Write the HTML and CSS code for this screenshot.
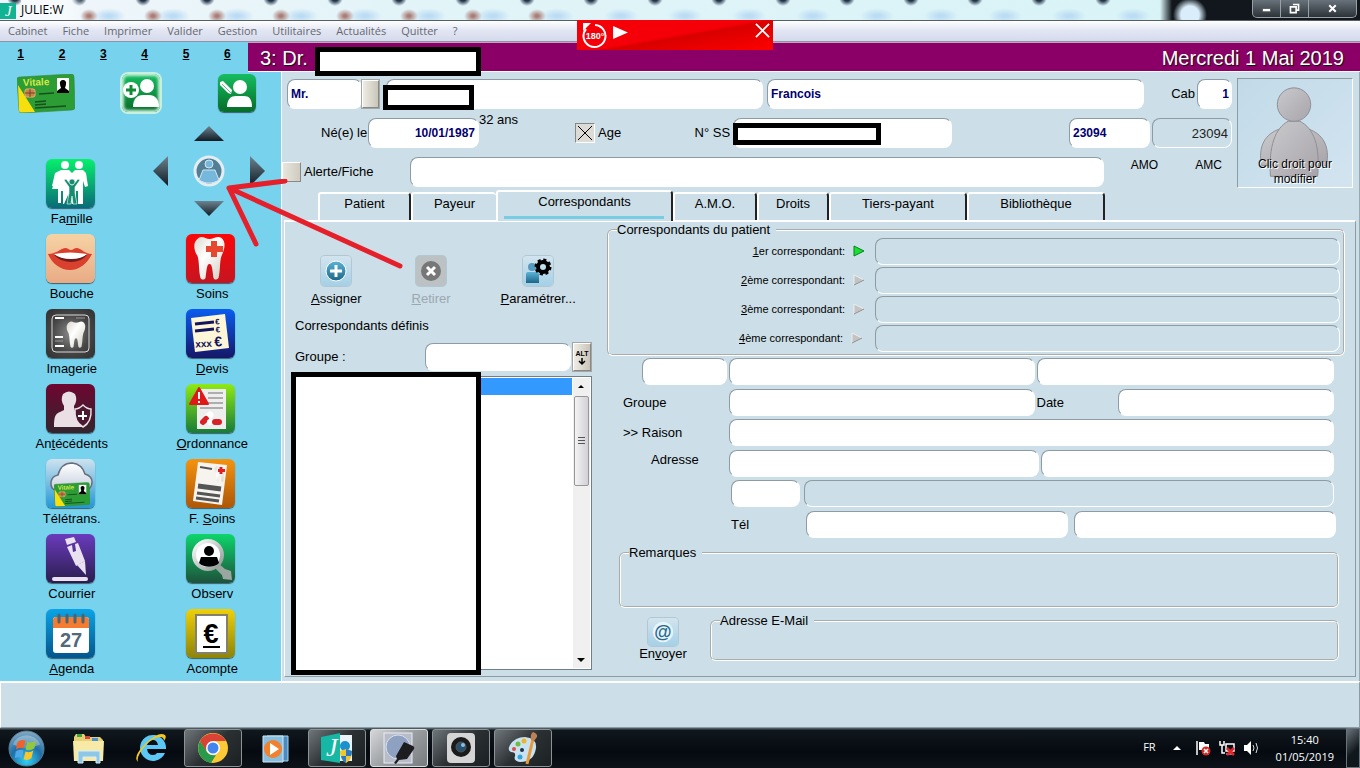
FILE: index.html
```html
<!DOCTYPE html>
<html lang="fr">
<head>
<meta charset="utf-8">
<title>JULIE:W</title>
<link rel="stylesheet" href="styles.css">
</head>
<body>
<svg class="defs" aria-hidden="true">
  <defs>
    <linearGradient id="g-arrow" x1="0" y1="0" x2="0" y2="1"><stop offset="0" stop-color="#6d8390"/><stop offset="1" stop-color="#101c24"/></linearGradient>
    <linearGradient id="g-tooth" x1="0" y1="0" x2="1" y2="1"><stop offset="0" stop-color="#d9d6cc"/><stop offset=".4" stop-color="#ffffff"/><stop offset="1" stop-color="#cfcabd"/></linearGradient>
    <linearGradient id="g-body" x1="0" y1="0" x2="1" y2="1"><stop offset="0" stop-color="#c9c9cc"/><stop offset="1" stop-color="#a8a5aa"/></linearGradient>
    <linearGradient id="g-cloud" x1="0" y1="0" x2="0" y2="1"><stop offset="0" stop-color="#ffffff"/><stop offset="1" stop-color="#c3cede"/></linearGradient>
    <linearGradient id="g-blue" x1="0" y1="0" x2="0" y2="1"><stop offset="0" stop-color="#5cb4d8"/><stop offset="1" stop-color="#1c6688"/></linearGradient>
    <linearGradient id="g-metal" x1="0" y1="0" x2="1" y2="1"><stop offset="0" stop-color="#ffffff"/><stop offset="1" stop-color="#8d9793"/></linearGradient>
    <radialGradient id="g-orb" cx=".5" cy=".85" r=".9"><stop offset="0" stop-color="#2fd3f7"/><stop offset=".5" stop-color="#1e6ea8"/><stop offset="1" stop-color="#93b4c8"/></radialGradient>
    <symbol id="card" viewBox="0 0 58 39">
      <path d="M3 3 L54 0 Q57 0 57 3 L58 33 Q58 36 55 36 L5 39 Q2 39 2 36 L0 5 Q0 3 3 3Z" fill="#2c9c34" stroke="#3b8440" stroke-width=".6"/>
      <path d="M1 11 L18 38 L4 38.500 Q2 38.500 2 36Z" fill="#f6df0c"/>
      <text x="6" y="12" font-size="10" class="svg-label" fill="#d6e84a" transform="rotate(-2 6 13)">Vitale</text>
      <rect x="40" y="4" width="12" height="15" fill="#fff"/><path d="M46 6a3 3 0 0 1 3 4c0 2-1 3-1 4l4 3v2H40v-2l4-3c0-1-1-2-1-4a3 3 0 0 1 3-4Z" fill="#000"/>
      <rect x="8" y="15" width="10" height="8" rx="2" fill="#c9824a" stroke="#f0b070"/><path d="M8 19h10M13 15v8" stroke="#73451f"/>
      <path d="M22 20l15-1M18 28l11-1M18 31l11-1M18 34l31-2" stroke="#174f1f" stroke-width="1.500"/>
    </symbol>
    <symbol id="tooth" viewBox="0 0 32 44">
      <path d="M5 2C9-1 12 3 16 3S24-1 28 2c5 4 3 12 0 18-2 6-1 14-3 22-2 2-4 2-5 0-1-6-1-14-4-14s-3 8-4 14c-1 2-4 2-5 0-2-8-1-16-3-22C0 14-1 6 5 2Z" fill="url(#g-tooth)"/>
    </symbol>
  </defs>
</svg>
<div class="app">
  <header class="titlebar">
    <svg class="logo" viewBox="0 0 16 16"><rect width="16" height="16" fill="#12b393"/><text x="5" y="13" class="script-j" font-size="15" fill="#fff">J</text></svg>
    <span class="title">JULIE:W</span>
    <div class="window-buttons">
      <button class="wb" aria-label="Réduire"><svg viewBox="0 0 16 16"><rect x="3" y="8" width="10" height="4" fill="#fff" stroke="#555"/></svg></button>
      <button class="wb" aria-label="Restaurer"><svg viewBox="0 0 16 16"><path d="M6 3h7v7h-2M3 6h7v7H3z" fill="none" stroke="#fff" stroke-width="2"/></svg></button>
      <button class="wb wb-close" aria-label="Fermer"><svg viewBox="0 0 16 16"><path d="M4 4l8 8M12 4l-8 8" stroke="#fff" stroke-width="2.500"/></svg></button>
    </div>
  </header>
  <nav class="menubar">
    <button>Cabinet</button><button>Fiche</button><button>Imprimer</button><button>Valider</button><button>Gestion</button><button>Utilitaires</button><button>Actualités</button><button>Quitter</button><button>?</button>
  </nav>
  <div class="banner-row">
    <div class="shortcuts"><a href="#">1</a><a href="#">2</a><a href="#">3</a><a href="#">4</a><a href="#">5</a><a href="#">6</a></div>
    <div class="banner"><span>3: Dr.</span><span class="date">Mercredi 1 Mai 2019</span><i class="mask mask-doctor"></i></div>
  </div>
  <main class="main">
    <aside class="sidebar">
      <div class="top-icons">
        <button class="bare card-btn" aria-label="Carte Vitale"><svg class="card-icon"><use href="#card"/></svg></button>
        <button class="bare" aria-label="Nouveau patient"><svg class="sq green glow" viewBox="0 0 38 38"><circle cx="25" cy="12" r="7" fill="#fff"/><path d="M11 33c0-8 4-12 10-12h6c6 0 10 4 10 12Z" fill="#fff"/><circle cx="9" cy="16" r="8" fill="#fff"/><path d="M9 11v10M4 16h10" stroke="#118a38" stroke-width="3"/></svg></button>
        <button class="bare" aria-label="Modifier patient"><svg class="sq green" viewBox="0 0 38 38"><circle cx="22" cy="13" r="7" fill="#fff"/><path d="M9 33c0-8 4-11 9-11h8c5 0 8 3 8 11Z" fill="#fff"/><path d="M2 8l3-1 9 9-1 4-3-1-8-8Z" fill="#fff"/><path d="M4 10l9 9" stroke="#18a04a" stroke-width=".7"/></svg></button>
      </div>
      <div class="tiles">
        <button class="tile"><svg class="sq famille" viewBox="0 0 49 49"><g fill="#fff"><circle cx="19" cy="6" r="4"/><circle cx="33" cy="6" r="4"/><path d="M15 11h8l3 3 3-3h8l3 3 2 13-3 1-2-6v23h-5V32h-2v13h-4l-4-9-4 9h-1V32h-2v12h-3V30h-6l4-11-1 9-3-1 3-13Z"/></g><g fill="#168c70" stroke="#fff" stroke-width=".6"><circle cx="26" cy="23" r="3"/><path d="M18 21l5 7v6l-2 11h4l1-8 1 8h4l-2-11v-6l5-7-2-1-5 6h-2l-5-6Z"/></g></svg><span>Fa<u>m</u>ille</span></button>
        <div class="pad">
          <button class="bare up" aria-label="Haut"><svg width="30" height="15"><path d="M0 15L15 0l15 15Z" fill="url(#g-arrow)"/></svg></button>
          <button class="bare left" aria-label="Gauche"><svg width="15" height="30"><path d="M15 0v30L0 15Z" fill="url(#g-arrow)"/></svg></button>
          <button class="bare center" aria-label="Fiche patient"><svg width="34" height="34" viewBox="0 0 34 34"><circle cx="17" cy="17" r="14" fill="#527f96" stroke="#e3edf2" stroke-width="3"/><g fill="#75b8db" stroke="#d4e7f0"><circle cx="17" cy="10" r="4"/><path d="M11 16h12l4 10c-6 4-14 4-20 0Z"/></g></svg></button>
          <button class="bare right" aria-label="Droite"><svg width="15" height="30"><path d="M0 0v30l15-15Z" fill="url(#g-arrow)"/></svg></button>
          <button class="bare down" aria-label="Bas"><svg width="30" height="15"><path d="M0 0L15 15 30 0Z" fill="url(#g-arrow)"/></svg></button>
        </div>
        <button class="tile"><svg class="sq bouche" viewBox="0 0 49 49"><path d="M2 20c8 0 12-5 17-6 3 0 4 2 6 2s3-2 6-2c5 1 8 6 15 6-5 10-13 16-22 16S6 30 2 20Z" fill="#d9402d"/><path d="M8 21q16-3 33 0-6 7-16 7T8 21Z" fill="#701c1c"/><path d="M8 20q16-3 33 0-5 5-16 5T8 20Z" fill="#fff"/></svg><span>Bouche</span></button>
        <button class="tile"><svg class="sq soins" viewBox="0 0 49 49"><use href="#tooth" x="7" y="2" width="33" height="44"/><path d="M25 7h6v5h6v6h-6v5h-6v-5h-5v-6h5Z" fill="#e8472f"/></svg><span>Soins</span></button>
        <button class="tile"><svg class="sq imagerie" viewBox="0 0 49 49"><rect x="6" y="6" width="37" height="37" rx="4" fill="none" stroke="#d8d8d8"/><path d="M9 9h9M9 28h8M9 37h9" stroke="#fff" stroke-width="2"/><path d="M30 9h9M9 32h8" stroke="#999"/><use href="#tooth" x="20" y="12" width="20" height="27"/></svg><span>Imagerie</span></button>
        <button class="tile"><svg class="sq devis" viewBox="0 0 49 49"><path d="M5 9l34-4 4 34-34 4Z" fill="#fdf7d8"/><path d="M9 15l19-2M9 22l19-2" stroke="#15155e" stroke-width="3"/><g fill="#15155e" class="svg-label" transform="rotate(-3 20 30)"><text x="30" y="16" font-size="8">€</text><text x="30" y="24" font-size="8">€</text><text x="9" y="38" font-size="10">xxx</text><text x="28" y="38" font-size="14">€</text></g></svg><span><u>D</u>evis</span></button>
        <button class="tile"><svg class="sq antecedents" viewBox="0 0 49 49"><path d="M17 10q6-5 12 0 3 6-1 12v4l8 5v12H8c0-10 1-13 6-15l4-2v-4q-4-6-1-12Z" fill="#eadfe4"/><path d="M37 21q4 4 8 4 1 13-8 18-9-5-8-18 4 0 8-4Z" fill="#4b1830" stroke="#eadfe4" stroke-width="1.500"/><path d="M37 27v9M32 32h9" stroke="#fff" stroke-width="2"/></svg><span>An<u>t</u>écédents</span></button>
        <button class="tile"><svg class="sq ordonnance" viewBox="0 0 49 49"><path d="M11 5h29v40H11Z" fill="#eeeeee"/><path d="M22 9h15M22 14h15M14 19h23M14 24h23" stroke="#999" stroke-width="1.500"/><path d="M13 4l9 16H4Z" fill="#e01818" stroke="#e01818" stroke-width="2" stroke-linejoin="round"/><path d="M13 8v7M13 17v2" stroke="#fff" stroke-width="2"/><path d="M17 38l7-7" stroke="#fff" stroke-width="7" stroke-linecap="round"/><path d="M17 38l3-3" stroke="#d72327" stroke-width="6" stroke-linecap="round"/><path d="M24 38h9" stroke="#fff" stroke-width="6" stroke-linecap="round"/><path d="M29 38h4" stroke="#d72327" stroke-width="6" stroke-linecap="round"/></svg><span><u>O</u>rdonnance</span></button>
        <button class="tile"><svg class="sq teletrans" viewBox="0 0 49 49"><path d="M12 32q-8-1-7-9 1-6 7-7 3-12 14-12 10 1 13 11 7 2 7 8 0 7-7 9Z" fill="url(#g-cloud)" stroke="#66707c" stroke-width="1.500"/><use href="#card" x="8" y="23" width="36" height="25"/></svg><span>Télétrans.</span></button>
        <button class="tile"><svg class="sq fsoins" viewBox="0 0 49 49"><path d="M12 3l29 3-5 40-29-4Z" fill="#f7f3ef"/><path d="M14 8l12 2" stroke="#555" stroke-width="2"/><path d="M12 27l23 3" stroke="#555" stroke-width="5"/><path d="M11 34l23 3M10 39l23 3" stroke="#555" stroke-width="3"/><use href="#tooth" x="28" y="7" width="12" height="16"/><path d="M35 8v7M32 11.500h7" stroke="#e02020" stroke-width="3"/></svg><span>F. <u>S</u>oins</span></button>
        <button class="tile"><svg class="sq courrier" viewBox="0 0 49 49"><g fill="#e9e0f0"><path d="M19 5l9-2 2 5-9 3Z"/><path d="M21 13l5-2 1 7 3-1-1-7 3-1 7 18-9 5Z"/><path d="M31 31l8-4 1 14Z"/><rect x="6" y="43" width="36" height="4" rx="2"/></g></svg><span>Courrier</span></button>
        <button class="tile"><svg class="sq observ" viewBox="0 0 49 49"><path d="M33 30l6 5 6 2 1 9-9-1-1-4-7-7Z" fill="#9aa7a0"/><circle cx="22" cy="21" r="14" fill="#fff" stroke="url(#g-metal)" stroke-width="4"/><circle cx="23" cy="17" r="5"/><path d="M15 23h16l2 6c-5 5-15 5-20 0Z"/></svg><span>Observ</span></button>
        <button class="tile"><svg class="sq agenda" viewBox="0 0 49 49"><rect x="7" y="8" width="36" height="36" rx="3" fill="#fff"/><path d="M7 19V11q0-3 3-3h30q3 0 3 3v8Z" fill="#f47b30"/><path d="M13 6v7M21 6v7M29 6v7M37 6v7" stroke="#4d6470" stroke-width="3" stroke-linecap="round"/><text x="25" y="38" font-size="20" class="svg-label" text-anchor="middle" fill="#51697a">27</text></svg><span><u>A</u>genda</span></button>
        <button class="tile"><svg class="sq acompte" viewBox="0 0 49 49"><rect x="10" y="6" width="31" height="38" fill="#fff" stroke="#84816a" stroke-width="2"/><text x="25" y="34" font-size="27" class="svg-label" text-anchor="middle">€</text><path d="M17 38h17" stroke="#000" stroke-width="2"/></svg><span>Acompte</span></button>
      </div>
    </aside>
    <section class="content">
      <div class="patient">
        <div class="patient-rows">
          <div class="row row-name">
            <input class="field civ" value="Mr." aria-label="Civilité"><button class="bevel civ-btn" aria-label="Choisir la civilité"></button>
            <div class="name-wrap"><input class="field" aria-label="Nom"><i class="mask mask-name"></i></div>
            <input class="field firstname" value="Francois" aria-label="Prénom">
            <label class="cab" for="cab">Cab</label><input id="cab" class="field num cab-input" value="1">
          </div>
          <div class="row row-birth">
            <label class="born" for="born">Né(e) le</label><input id="born" class="field num date-input" value="10/01/1987">
            <span class="age">32 ans</span>
            <label class="check"><input type="checkbox" checked class="box">Age</label>
            <label class="ss" for="ss">N° SS</label><div class="ss-wrap"><input id="ss" class="field"><i class="mask mask-ss"></i></div>
            <input class="field code" value="23094" aria-label="Code"><input class="field readonly num code2" value="23094" readonly aria-label="Numéro">
          </div>
          <div class="row row-alert">
            <label class="check"><input type="checkbox" class="box">Alerte/Fiche</label>
            <input class="field alert-input" aria-label="Alerte">
            <span class="amo">AMO</span><span class="amc">AMC</span>
          </div>
        </div>
        <div class="photo">
          <svg viewBox="0 0 116 110"><g fill="url(#g-body)" stroke="#8f8f96"><path d="M24 88C20 68 28 56 42 51H72C86 56 94 68 90 88Z"/><path d="M33 99C31 68 38 50 51 43H63C77 50 84 68 81 99Z"/><circle cx="57" cy="26" r="17"/></g></svg>
          <span>Clic droit pour modifier</span>
        </div>
      </div>
      <div class="tabs" role="tablist">
        <button class="tab w-a" role="tab">Patient</button><button class="tab w-b" role="tab">Payeur</button><button class="tab w-c active" role="tab" aria-selected="true">Correspondants</button><button class="tab w-d" role="tab">A.M.O.</button><button class="tab w-e" role="tab">Droits</button><button class="tab w-f" role="tab">Tiers-payant</button><button class="tab w-f" role="tab">Bibliothèque</button>
      </div>
      <div class="panel">
        <div class="left-col">
          <div class="actions">
            <button class="action"><svg viewBox="0 0 30 30"><circle cx="15" cy="15" r="10" fill="url(#g-blue)" stroke="#fff"/><path d="M15 9v12M9 15h12" stroke="#fff" stroke-width="3"/></svg><span><u>A</u>ssigner</span></button>
            <button class="action off" disabled><svg viewBox="0 0 30 30"><circle cx="15" cy="15" r="10" fill="#777"/><path d="M11 11l8 8M19 11l-8 8" stroke="#fff" stroke-width="3"/></svg><span><u>R</u>etirer</span></button>
            <button class="action"><svg viewBox="0 0 30 30"><circle cx="9" cy="11" r="4" fill="#559ac0"/><path d="M3 27V18q0-2 2-2h8q3 0 3 3v8Z" fill="url(#g-blue)"/><circle cx="20" cy="11" r="5" fill="none" stroke="#000" stroke-width="4"/><circle cx="20" cy="11" r="7" fill="none" stroke="#000" stroke-width="3" stroke-dasharray="3 2.500"/></svg><span><u>P</u>aramétrer...</span></button>
          </div>
          <p class="defined">Correspondants définis</p>
          <div class="group-row"><label for="grp">Groupe :</label><input id="grp" class="field"><button class="bevel alt" aria-label="Liste des groupes"><svg viewBox="0 0 16 26"><text x="8" y="12" font-size="7" class="svg-label" text-anchor="middle">ALT</text><path d="M8 14v6M5 17l3 3 3-3" stroke="#000" fill="none" stroke-width="1.500"/></svg></button></div>
          <div class="list">
            <ul><li class="selected"></li></ul>
            <div class="scroll"><button class="bare" aria-label="Monter"><svg width="16" height="16"><path d="M5 10l3-3 3 3Z"/></svg></button><div class="thumb"></div><button class="bare scroll-end" aria-label="Descendre"><svg width="16" height="16"><path d="M4 6h8l-4 4Z"/></svg></button></div>
            <i class="mask mask-list"></i>
          </div>
        </div>
        <div class="right-col">
          <fieldset class="frame corr">
            <legend>Correspondants du patient</legend>
            <div class="corr-row"><label for="c1"><u>1</u>er correspondant:</label><svg viewBox="0 0 12 12"><path d="M1 1v10l10-5Z" fill="#18e030" stroke="#08801c"/></svg><input id="c1" class="field readonly" readonly></div>
            <div class="corr-row"><label for="c2"><u>2</u>ème correspondant:</label><svg viewBox="0 0 12 12"><path d="M1 1v10l10-5Z" fill="#c3c3c3" stroke="#eee"/><path d="M1 11l10-5" stroke="#888"/></svg><input id="c2" class="field readonly" readonly></div>
            <div class="corr-row"><label for="c3"><u>3</u>ème correspondant:</label><svg viewBox="0 0 12 12"><path d="M1 1v10l10-5Z" fill="#c3c3c3" stroke="#eee"/><path d="M1 11l10-5" stroke="#888"/></svg><input id="c3" class="field readonly" readonly></div>
            <div class="corr-row last"><label for="c4"><u>4</u>ème correspondant:</label><svg viewBox="0 0 12 12"><path d="M1 1v10l10-5Z" fill="#c3c3c3" stroke="#eee"/><path d="M1 11l10-5" stroke="#888"/></svg><input id="c4" class="field readonly" readonly></div>
          </fieldset>
          <div class="details">
            <div class="block"><div class="drow"><div class="lead"><input class="field civ2" aria-label="Titre"></div><input class="field f-wide" aria-label="Nom du correspondant"><input class="field f-half" aria-label="Prénom du correspondant"></div></div>
            <div class="block">
              <div class="drow"><label class="lead" for="dg">Groupe</label><input id="dg" class="field f-half"><div class="f-half date-part"><label for="dd">Date</label><input id="dd" class="field"></div></div>
              <div class="drow"><label class="lead" for="dr">&gt;&gt; Raison</label><input id="dr" class="field f-half"></div>
            </div>
            <div class="block">
              <div class="drow"><label class="lead indent" for="da">Adresse</label><input id="da" class="field f-wider"><input class="field f-half" aria-label="Complément d'adresse"></div>
              <div class="drow city"><span class="lead"></span><input class="field zip" aria-label="Code postal"><input class="field readonly f-half" readonly aria-label="Ville"></div>
            </div>
            <div class="block"><div class="drow phone"><label for="dt">Tél</label><input id="dt" class="field f-half"><input class="field f-half" aria-label="Téléphone 2"></div></div>
          </div>
          <fieldset class="frame remarks"><legend>Remarques</legend></fieldset>
          <div class="mail-row">
            <button class="action send"><svg viewBox="0 0 30 30"><circle cx="15" cy="15" r="11" fill="#e6f4fb"/><text x="15" y="21" font-size="19" class="svg-label" text-anchor="middle" fill="#28688e">@</text></svg><span>En<u>v</u>oyer</span></button>
            <fieldset class="frame mail"><legend>Adresse E-Mail</legend></fieldset>
          </div>
        </div>
      </div>
    </section>
  </main>
  <div class="statusbar"></div>
  <footer class="taskbar">
    <button class="start" aria-label="Démarrer"><svg viewBox="0 0 38 38"><circle cx="19" cy="19" r="18" fill="url(#g-orb)" stroke="#5b7a8c"/><path d="M5 15A15 15 0 0 1 33 15Q19 22 5 15Z" fill="#fff" opacity=".3"/><path d="M10 12q4-3 8-1l-2 8q-4-2-8 1Z" fill="#f0622b"/><path d="M20 12q4 2 9-1l-2 8q-5 3-9 1Z" fill="#93c83e"/><path d="M8 22q4-3 8-1l-2 8q-4-2-7 0Z" fill="#4fa8e8"/><path d="M18 22q4 2 8-1l-2 8q-4 3-8 1Z" fill="#fbc62c"/></svg></button>
    <button class="task" aria-label="Explorateur"><svg viewBox="0 0 34 34"><path d="M2 6l2-3h8l2 3 14 0 3 3v20H2Z" fill="#e7cf74"/><path d="M5 3h5v3H5Z" fill="#3aa648"/><path d="M13 5h5v3h-5Z" fill="#d24b3a"/><path d="M20 7h6v3h-6Z" fill="#5291cf"/><path d="M1 10h31l-1 20H2Z" fill="#f7e9a6"/><path d="M6 20h22v12h-4v-6H11v6H6Z" fill="#8ec8e6" stroke="#d9eef8"/></svg></button>
    <button class="task" aria-label="Internet Explorer"><svg viewBox="0 0 34 34"><path d="M31 22A13 13 0 1 1 32 18H13q1 6 6 6 3 0 4-2ZM13 14h11q-1-5-5-5-5 0-6 5Z" fill="#5cc8f5" fill-rule="evenodd"/><path d="M4 31Q-2 26 12 12 25 0 31 4q2 2-1 6 0-4-4-4-6 0-14 8Q2 25 4 31Z" fill="#f5c725"/></svg></button>
    <button class="task open" aria-label="Chrome"><svg viewBox="0 0 34 34"><circle cx="17" cy="17" r="15" fill="#fbc936"/><path d="M4 10A15 15 0 0 1 30 10H17L10 20Z" fill="#d94235"/><path d="M4 10l7 11q3 4 9 3l-5 8A15 15 0 0 1 4 10Z" fill="#289a4c"/><circle cx="17" cy="17" r="7" fill="#fff"/><circle cx="17" cy="17" r="5.500" fill="#4484ee"/></svg></button>
    <button class="task" aria-label="Lecteur multimédia"><svg viewBox="0 0 34 34"><path d="M9 5h21v25H9Z" fill="#4c8bc0" stroke="#a8d2ec"/><path d="M5 5h20v26H5Z" fill="#88bfdf" stroke="#d2e9f5"/><circle cx="15" cy="18" r="9" fill="#f3802c"/><path d="M12 12l9 6-9 6Z" fill="#fff"/></svg></button>
    <button class="task open" aria-label="Julie"><svg viewBox="0 0 34 34"><path d="M1 6l19-4v30L1 29Z" fill="#16b7a4"/><path d="M20 4h12v26H20Z" fill="#e9f3f8"/><circle cx="25" cy="15" r="5" fill="#1c91ce"/><text x="6" y="25" font-size="26" class="script-j" fill="#fff">J</text><path d="M20 20l6-2 6 2q0 9-6 12-6-3-6-12Z" fill="#f2c631"/><path d="M26 18l6 2q0 3-1 5h-5ZM26 25v7q-4-2-5-7Z" fill="#287bc8"/></svg></button>
    <button class="task open current" aria-label="Scanner"><svg viewBox="0 0 34 34"><rect x="2" y="2" width="28" height="30" fill="#b8bcc6" stroke="#e8edf8"/><circle cx="16" cy="16" r="12" fill="#8fa1c0" stroke="#d5e0f0"/><path d="M22 11l9 4q2 1 1 3l-7 10-8 1-3 4-2-1 3-4-1-3Z" fill="#1d1d1f"/></svg></button>
    <button class="task open" aria-label="Caméra"><svg viewBox="0 0 34 34"><rect x="3" y="2" width="28" height="30" rx="4" fill="#d6d5d6"/><circle cx="17" cy="16" r="10" fill="#1b1b1c"/><circle cx="17" cy="16" r="5" fill="#27506f" stroke="#555"/><circle cx="19" cy="14" r="2" fill="#8bbde0"/></svg></button>
    <button class="task open" aria-label="Paint"><svg viewBox="0 0 34 34"><path d="M4 14Q9 6 19 6q12 1 11 11-2 14-16 14-7-1-5-6 1-4-4-4-4-2-1-7Z" fill="#c9e2f1"/><circle cx="12" cy="13" r="2.500" fill="#6ebc42"/><circle cx="18" cy="10" r="2.500" fill="#eeb32f"/><circle cx="8" cy="18" r="2" fill="#e04c3f"/><circle cx="14" cy="26" r="2.500" fill="#35a3d9"/><circle cx="16" cy="19" r="2" fill="#234"/><path d="M27 8l-6 25" stroke="#e89a3a" stroke-width="3"/><path d="M25 9q-1-6 2-8 5 2 4 5l-3 4Z" fill="#bd8354"/></svg></button>
    <div class="tray">
      <span class="lang">FR</span>
      <svg class="tri" viewBox="0 0 8 5"><path d="M0 4l4-4 4 4Z" fill="#fff"/></svg>
      <svg class="ti" viewBox="0 0 16 16"><path d="M2 1v14" stroke="#fff" stroke-width="1.500"/><path d="M4 2h5l1 2h4v6H4Z" fill="#fff"/><circle cx="11" cy="11" r="4.500" fill="#d42a26"/><path d="M9 9l4 4M13 9l-4 4" stroke="#fff" stroke-width="1.500"/></svg>
      <svg class="ti" viewBox="0 0 16 16"><path d="M1 1v4h4V1M3 5v8h3M7 4h8v7H7Z" stroke="#fff" fill="none" stroke-width="1.500"/><path d="M7 14h6" stroke="#fff"/><path d="M8 8l7 7M15 8l-7 7" stroke="#e3242b" stroke-width="2.500"/></svg>
      <svg class="ti" viewBox="0 0 16 16"><path d="M1 5h3l4-4v14l-4-4H1Z" fill="#fff"/><path d="M10 5q2 3 0 6M13 3q3 5 0 10" stroke="#ddd" fill="none"/></svg>
      <div class="clock"><span>15:40</span><span>01/05/2019</span></div>
      <button class="show-desktop" aria-label="Afficher le bureau"></button>
    </div>
  </footer>
  <div class="toast">
    <svg class="turn" viewBox="0 0 28 28"><path d="M5 8A11 11 0 1 0 14 4" fill="none" stroke="#fff" stroke-width="2"/><path d="M2 2h8l-8 8Z" fill="#fff"/><text x="14" y="18" font-size="9" class="svg-label" text-anchor="middle" fill="#fff">180°</text></svg>
    <svg class="play" viewBox="0 0 16 14"><path d="M0 0l16 7-16 7Z" fill="#fff"/></svg>
    <button class="bare toast-close" aria-label="Fermer"><svg viewBox="0 0 16 16"><path d="M1 1l14 14M15 1L1 15" stroke="#fff" stroke-width="2"/></svg></button>
  </div>
  <svg class="pointer" viewBox="0 0 180 92"><path d="M174 87L3 9M3 9L59 2M3 9l27 56" fill="none" stroke="#e6202a" stroke-width="5" stroke-linecap="round"/></svg>
</div>
</body>
</html>
```
FILE: styles.css
```css
* { box-sizing: border-box; }
body { margin: 0; font: 13px/16px "Liberation Sans", Arial, sans-serif; color: #000; }
button, input { font: inherit; color: inherit; margin: 0; padding: 0; }
button { border: 0; background: none; }
svg { display: block; flex: none; }
.defs { position: absolute; width: 0; height: 0; }
.svg-label { font-family: "Liberation Sans", sans-serif; font-weight: bold; }
.script-j { font-family: "Liberation Serif", serif; font-style: italic; }
.app { position: relative; display: flex; flex-direction: column; min-height: 100vh; background: #ccdee7; }
.mask { position: absolute; border: 5px solid #000; background: #fff; }

/* Title bar */
.titlebar { position: relative; display: flex; align-items: flex-start; height: 21px; border-bottom: 1px solid #555f66; overflow: hidden;
  background: radial-gradient(circle at 1190px 15px, #d9edfa 9px, transparent 17px), linear-gradient(90deg, transparent 1160px, #11171c 1172px), linear-gradient(90deg, #f2f6fb, #e2f4f8 30%, #d6f3f6); }
.titlebar::before { content: ""; position: absolute; inset: 0; width: 1160px; background: radial-gradient(circle at 35px -2px, #223348 3px, transparent 8px) 44px 0 / 64px 21px repeat-x, radial-gradient(ellipse at 35px 16px, #bcdcf4 3px, transparent 17px) 10px 0 / 64px 21px repeat-x; }
.titlebar::after { content: ""; position: absolute; top: 0; bottom: 0; left: 65px; width: 490px; background: radial-gradient(ellipse 9px 7px at 24px 16px, #a97c75 15%, transparent) 0 0 / 64px 21px repeat-x; }
.logo { width: 16px; height: 16px; margin-top: 3px; z-index: 1; }
.title { z-index: 1; margin-left: 5px; padding: 2px 20px 2px 0; font: 12px/16px "Open Sans", sans-serif; background: linear-gradient(90deg, #f6fafd 70%, transparent); }
.window-buttons { z-index: 1; display: flex; margin-left: auto; margin-right: 3px; height: 18px; border: 1px solid #98a1a8; border-top: 0; border-radius: 0 0 5px 5px; background: linear-gradient(#68727a, #2c3339); }
.wb { display: grid; place-items: center; width: 28px; border-right: 1px solid #98a1a8; }
.wb svg { width: 13px; height: 13px; }
.wb-close { width: 47px; border-right: 0; }

.menubar { display: flex; gap: 15px; height: 21px; padding: 0 8px; background: linear-gradient(#fff, #e3e7f4 45%, #d5daec); border-bottom: 1px solid #8f93a5; font: 11px/20px "Open Sans", sans-serif; color: #66696f; }

/* Banner */
.banner-row { display: flex; height: 30px; background: #77d2ed; }
.shortcuts { display: flex; width: 248px; padding: 4px 0 0; }
.shortcuts a { flex: 1; text-align: center; color: #000; font-weight: bold; font-size: 12px; line-height: 16px; }
.banner { position: relative; flex: 1; display: flex; justify-content: space-between; padding: 1px 16px 0 12px; background: #8b0066; border-top: 1px solid #c9a0bd; border-bottom: 1px solid #fff; color: #fff; font-size: 20px; line-height: 28px; text-shadow: 1px 1px 1px #111; }
.mask-doctor { left: 67px; top: 4px; width: 166px; height: 29px; z-index: 1; }

/* Sidebar */
.main { flex: 1; display: flex; }
.sidebar { width: 281px; flex: none; background: #77d2ed; }
.bare { display: block; }
.top-icons { display: flex; justify-content: space-between; align-items: center; height: 42px; padding: 0 25px 0 17px; }
.card-icon { width: 58px; height: 39px; }
.sq { border-radius: 6px; box-shadow: 0 1px 1px #38606f; }
.green { width: 38px; height: 38px; background: linear-gradient(#15bd60, #076c27); }
.glow { box-shadow: 0 0 0 2px #c7f0dd, inset 0 0 3px 2px #c7f0dd; }
.card-btn { margin-right: -12px; }
.tiles { display: grid; grid-template-columns: 1fr 1fr; row-gap: 7px; padding-top: 12px; }
.tile { align-self: end; display: flex; flex-direction: column; align-items: center; gap: 2px; white-space: nowrap; }
.tile .sq { width: 49px; height: 49px; }
.tile span { line-height: 17px; padding-left: 3px; }
.pad { display: grid; grid-template-columns: 15px 1fr 15px; grid-template-rows: 15px 1fr 15px; width: 112px; height: 90px; margin: 0 0 11px 12px; align-items: center; justify-items: center; }
.up { grid-area: 1 / 2; }
.left { grid-area: 2 / 1; }
.center { grid-area: 2 / 2; }
.right { grid-area: 2 / 3; }
.down { grid-area: 3 / 2; }
.famille { background: linear-gradient(#06f06c, #0a6a78); }
.bouche { background: linear-gradient(#f6d3a4, #e9ab85); }
.soins { background: linear-gradient(#fb0707, #c51521); }
.imagerie { background: radial-gradient(circle, #8a8a8a, #454545 55%, #303030); }
.devis { background: linear-gradient(#0a5cf0, #151766); }
.antecedents { background: linear-gradient(#6f0631, #33252d); }
.ordonnance { background: linear-gradient(#8eea12, #187a38); }
.teletrans { background: linear-gradient(#cfe2ee, #2197d6); }
.fsoins { background: linear-gradient(#f5930f, #ad5607); }
.courrier { background: linear-gradient(#6a3bbd, #2a1d4d); }
.observ { background: linear-gradient(#0cd66b, #1d523b); }
.agenda { background: linear-gradient(#0aa4e6, #04558c); }
.acompte { background: linear-gradient(#efd008, #8d8308); }

/* Fields */
.field { flex: none; min-width: 0; height: 30px; padding: 0 3px; border: 1px solid #fff; border-top-color: #8e9ba2; border-left-color: #8e9ba2; border-radius: 8px; background: #fff; color: #000070; font-size: 12px; font-weight: bold; }
.readonly { background: transparent; color: #222; font-size: 13px; font-weight: normal; }
.num { text-align: right; }
.bevel { border: 1px solid #888; border-top-color: #fff; border-left-color: #fff; outline: 1px solid #a5a5a5; outline-offset: 0; background: linear-gradient(90deg, #eeece4, #c9c5b9); }
.content { flex: 1; min-width: 0; display: flex; flex-direction: column; border-left: 1px solid #fff; border-right: 1px solid #9aa8af; }

/* Patient header */
.patient { display: flex; gap: 5px; padding: 6px 6px 0 0; }
.patient-rows { flex: 1; min-width: 0; display: flex; flex-direction: column; gap: 9px; padding-top: 1px; }
.row { display: flex; align-items: center; height: 30px; }
.row-name { padding-left: 5px; }
.civ { width: 75px; }
.civ-btn { width: 17px; height: 28px; margin-right: 7px; }
.name-wrap { position: relative; flex: 1 1 8px; }
.name-wrap .field, .ss-wrap .field { width: 100%; display: block; }
.mask-name { left: -3px; top: 6px; width: 91px; height: 25px; }
.firstname { flex: 1; margin-left: 4px; }
.cab { width: 53px; padding-right: 2px; text-align: right; }
.cab-input { width: 35px; padding-right: 2px; }
.row-birth { padding-left: 39px; }
.born { width: 47px; }
.date-input { width: 111px; }
.age { align-self: flex-start; line-height: 4px; width: 96px; }
.check { display: flex; align-items: center; gap: 3px; }
.box { appearance: none; width: 20px; height: 20px; border: 1px solid #888; border-top-color: #fff; border-left-color: #fff; background: linear-gradient(90deg, #e8e6dd, #cfcbbf); }
.box:checked { border-color: #888 #fff #fff #888; background: linear-gradient(45deg, transparent 48%, #000 48% 52%, transparent 52%) center / 14px 14px no-repeat, linear-gradient(-45deg, transparent 48%, #000 48% 52%, transparent 52%) center / 14px 14px no-repeat, #dddbd5; }
.row-alert .box { width: 19px; }
.ss { width: 112px; text-align: right; padding-right: 3px; }
.ss-wrap { position: relative; flex: 1; max-width: 219px; }
.mask-ss { left: 0; top: 5px; width: 148px; height: 22px; }
.code { width: 81px; margin-left: auto; }
.code2 { width: 80px; margin-left: 2px; }
.alert-input { flex: 1; margin-left: 37px; }
.amo { width: 81px; text-align: center; margin-top: -14px; font-size: 12px; }
.amc { width: 47px; text-align: center; margin-top: -14px; font-size: 12px; }
.photo { position: relative; flex: none; width: 116px; height: 110px; border: 1px solid #fff; border-top-color: #8e9ba2; border-left-color: #8e9ba2; background: linear-gradient(135deg, #c2dae8, #d2e4f0); }
.photo span { position: absolute; left: 12px; right: 12px; bottom: 0; font-size: 12px; line-height: 15px; text-align: center; text-shadow: 1px 1px #fff; }

/* Tabs and panel */
.tabs { display: flex; align-items: flex-end; margin: 2px 0 0 36px; height: 30px; }
.tab { height: 28px; padding-bottom: 7px; border-top: 2px solid #fff; border-left: 2px solid #fff; border-right: 2px solid #222; border-radius: 3px 4px 0 0; }
.tab.active { height: 31px; margin-bottom: -1px; padding-bottom: 9px; background: linear-gradient(#77cbe2, #77cbe2) 6px 24px / 160px 3px no-repeat, #ccdee7; z-index: 1; }
.w-a { width: 93px; }
.w-b { width: 85px; border-right: 0; }
.w-c { width: 177px; }
.w-d { width: 84px; }
.w-e { width: 72px; }
.w-f { width: 138px; }
.panel { flex: 1; display: flex; margin: 0 3px 4px 2px; border: 1px solid #8e9ba2; border-top: 2px solid #fff; border-left-color: #fff; }
.left-col { width: 308px; flex: none; display: flex; flex-direction: column; padding: 34px 1px 6px 6px; }
.actions { display: flex; gap: 50px; padding-left: 20px; }
.action { display: flex; flex-direction: column; align-items: center; gap: 5px; }
.action svg { width: 30px; height: 30px; border-radius: 4px; background: linear-gradient(#d2e4ee, #a5d0e6); box-shadow: 0 0 0 1px #b1c8d4; }
.action.off { color: #9ba8af; }
.action.off svg { background: #bcc1c4; }
.defined { margin: 11px 0 8px 4px; }
.group-row { display: flex; align-items: center; height: 30px; padding-left: 4px; }
.group-row label { width: 130px; }
.group-row .field { flex: 1; height: 28px; margin-right: 2px; }
.alt { width: 18px; height: 28px; margin-right: 1px; }
.alt svg { width: 16px; height: 26px; }
.list { position: relative; flex: 1; display: flex; margin-top: 4px; border: 1px solid #6f7e87; background: #fff; }
.list ul { flex: 1; list-style: none; margin: 1px 0; padding: 0; }
.selected { height: 17px; background: #3399ff; }
.scroll { width: 17px; display: flex; flex-direction: column; margin: 1px; background: #f0f0f0; }
.thumb { height: 90px; margin: 2px 1px 0; border: 1px solid #979797; border-radius: 2px; background: repeating-linear-gradient(#555 0 1px, transparent 1px 3px) center / 7px 8px no-repeat, linear-gradient(90deg, #f4f4f4, #d0d0d6); }
.scroll-end { margin-top: auto; }
.mask-list { left: -1px; top: -5px; bottom: -6px; width: 190px; }
.right-col { flex: 1; min-width: 0; padding: 0 10px 0 14px; display: flex; flex-direction: column; }
.frame { margin: 0; min-width: 0; padding: 0 3px 3px; border: 2px groove #fff; border-radius: 6px; }
.frame legend { margin-left: 5px; padding: 0 6px 0 0; }
.corr { display: flex; flex-direction: column; gap: 3px; }
.corr-row { display: flex; align-items: center; height: 26px; }
.corr-row label { width: 233px; text-align: right; font-size: 11px; }
.corr-row svg { width: 12px; height: 12px; margin: 0 10px 0 8px; }
.corr-row .field { flex: 1; height: 27px; }
.corr-row.last label { width: 231px; }
.corr-row.last svg { margin-right: 12px; }
.details { display: flex; flex-direction: column; gap: 4px; margin: 2px 11px 0 16px; }
.block { display: flex; flex-direction: column; gap: 3px; }
.drow { display: flex; align-items: center; gap: 2px; }
.drow .field { height: 27px; }
.lead { width: 104px; flex: none; }
.civ2 { width: 85px; margin-left: 19px; }
.indent { padding: 0 0 8px 28px; }
.f-half { flex: 1; }
.drow .f-wide { flex: 1.03; }
.drow .f-wider { flex: 1.06; }
.date-part { display: flex; align-items: center; }
.date-part label { width: 81px; }
.date-part .field { flex: 1; }
.zip { width: 69px; margin: 0 2px; }
.phone { padding-left: 108px; margin-right: -2px; gap: 6px; }
.phone label { width: 69px; }
.remarks { height: 63px; margin: 7px 6px 5px 12px; }
.mail-row { display: flex; align-items: flex-start; margin-right: 6px; }
.send { width: 103px; flex: none; padding: 5px 0 0 9px; gap: 0; }
.send svg { height: 28px; }
.mail { flex: 1; height: 48px; }
.statusbar { height: 47px; border: 1px solid #8e9ba2; border-top: 2px solid #fff; border-left-color: #fff; }

/* Taskbar */
.taskbar { display: flex; gap: 4px; height: 40px; background: linear-gradient(#4c5a62 0 1px, #10171d 2px, #050a10 60%, #0c1218); color: #fff; }
.start { width: 56px; padding: 1px 0 0 8px; }
.start svg { width: 37px; height: 37px; }
.task { width: 58px; height: 38px; margin-top: 1px; display: grid; place-items: center; border-radius: 3px; }
.task svg { width: 34px; height: 34px; }
.open { border: 1px solid #8c9296; background: linear-gradient(135deg, #6f767a, #2b3033 50%, #1b2023); }
.current { background: linear-gradient(135deg, #d4d6d8, #9b9ea1 50%, #777b7e); border-color: #ddd; }
.tray { margin-left: auto; display: flex; align-items: center; font: 11px/17px "Open Sans", sans-serif; }
.lang { margin: -4px 17px 0 0; }
.tri { width: 8px; height: 5px; margin-right: 14px; }
.ti { width: 16px; height: 16px; margin-right: 8px; }
.clock { display: flex; flex-direction: column; text-align: center; margin: 0 12px 0 9px; }
.show-desktop { width: 14px; height: 40px; border: 1px solid #69737a; background: linear-gradient(135deg, #69737a, #11181d 60%); }

/* Floating elements */
.toast { position: absolute; left: 577px; top: 20px; width: 196px; height: 30px; display: flex; align-items: flex-start; padding: 1px 3px 0 4px; background: linear-gradient(170deg, #f50008 50%, #d90000 55%, #f00); }
.turn { width: 28px; height: 28px; }
.play { width: 15px; height: 13px; margin: 5px 0 0 4px; }
.toast-close { margin: 2px 0 0 auto; }
.toast-close svg { width: 15px; height: 15px; }
.pointer { position: absolute; left: 226px; top: 179px; width: 180px; height: 92px; pointer-events: none; }
```
